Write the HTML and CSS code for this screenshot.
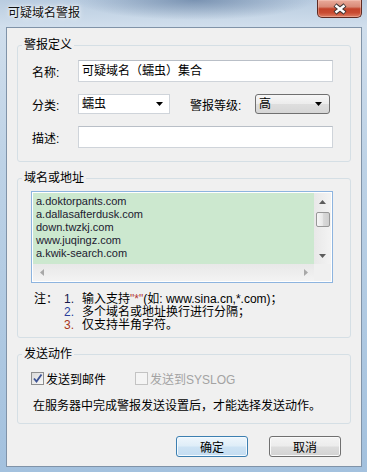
FILE: index.html
```html
<!DOCTYPE html>
<html>
<head>
<meta charset="utf-8">
<link rel="stylesheet" href="styles.css">
</head>
<body>

<div class="window">
    <div class="titlebar">
        <span class="title">可疑域名警报</span>
        <div class="close">
            <svg width="16" height="12" viewBox="0 0 16 12"><path d="M3 2 L13 10 M13 2 L3 10" stroke="#3e3433" stroke-width="4.6"/><path d="M3.5 2.5 L12.5 9.5 M12.5 2.5 L3.5 9.5" stroke="#fff" stroke-width="2.4"/></svg>
        </div>
    </div>

    <div class="client">
        <fieldset class="group group-alarm">
            <legend>警报定义</legend>
            <div class="body rows">
                <div class="row">
                    <span class="lbl">名称:</span>
                    <div class="textbox">可疑域名（蠕虫）集合</div>
                </div>
                <div class="row">
                    <span class="lbl">分类:</span>
                    <div class="combo">蠕虫<svg class="arrow" width="7" height="4" viewBox="0 0 7 4"><path d="M0 0 H7 L3.5 4 Z" fill="#000"/></svg></div>
                    <span class="lbl lbl-level">警报等级:</span>
                    <div class="combo combo-list">高<svg class="arrow" width="7" height="4" viewBox="0 0 7 4"><path d="M0 0 H7 L3.5 4 Z" fill="#000"/></svg></div>
                </div>
                <div class="row">
                    <span class="lbl">描述:</span>
                    <div class="textbox"></div>
                </div>
            </div>
        </fieldset>

        <fieldset class="group group-domain">
            <legend>域名或地址</legend>
            <div class="body body-domain">
                <div class="listbox">
                    <div class="lines">
                        <div>a.doktorpants.com</div>
                        <div>a.dallasafterdusk.com</div>
                        <div>down.twzkj.com</div>
                        <div>www.juqingz.com</div>
                        <div>a.kwik-search.com</div>
                    </div>
                    <div class="vscroll">
                        <div class="sbtn"><svg width="7" height="4" viewBox="0 0 7 4"><path d="M3.5 0 L7 4 H0 Z" fill="#5c5c5c"/></svg></div>
                        <div class="thumb"></div>
                        <div class="track"></div>
                        <div class="sbtn"><svg width="7" height="4" viewBox="0 0 7 4"><path d="M0 0 H7 L3.5 4 Z" fill="#5c5c5c"/></svg></div>
                    </div>
                    <div class="hscroll">
                        <div class="sbtn"><svg width="4" height="7" viewBox="0 0 4 7"><path d="M0 3.5 L4 0 V7 Z" fill="#a8a8a8"/></svg></div>
                        <div class="sbtn"><svg width="4" height="7" viewBox="0 0 4 7"><path d="M4 3.5 L0 0 V7 Z" fill="#a8a8a8"/></svg></div>
                    </div>
                    <div class="corner"></div>
                </div>

                <div class="note">
                    <span class="note-head">注：</span>
                    <div class="note-lines">
                        <div><span class="num n1">1.</span>输入支持<span class="star">"*"</span>(如: www.sina.cn,*.com)；</div>
                        <div><span class="num n2">2.</span>多个域名或地址换行进行分隔；</div>
                        <div><span class="num n3">3.</span>仅支持半角字符。</div>
                    </div>
                </div>
            </div>
        </fieldset>

        <fieldset class="group group-send">
            <legend>发送动作</legend>
            <div class="body body-send">
                <div class="checks">
                    <label class="check check-mail">
                        <span class="box checked"><svg width="11" height="11" viewBox="0 0 11 11"><path d="M2 5.5 L4.5 8.5 L9.5 1.5" fill="none" stroke="#3d5394" stroke-width="1.9"/></svg></span>
                        发送到邮件
                    </label>
                    <label class="check disabled">
                        <span class="box"></span>
                        发送到SYSLOG
                    </label>
                </div>
                <div class="hint">在服务器中完成警报发送设置后，才能选择发送动作。</div>
            </div>
        </fieldset>

        <div class="actions">
            <div class="btn btn-default">确定</div>
            <div class="btn">取消</div>
        </div>
    </div>
</div>

</body>
</html>
```

FILE: styles.css
```css
body { margin: 0; font-family: "Liberation Sans", "Noto Sans CJK SC", sans-serif; font-size: 12px; color: #000; }

/* window frame */
.window {
    width: 367px; height: 472px; box-sizing: border-box;
    padding: 0 5px 5px 6px;
    display: flex; flex-direction: column;
    background: linear-gradient(180deg, #b9cce0 0, #d0deec 26px, #bdd2e6 35%, #a3c1de 100%);
}
.titlebar {
    flex: none; height: 27px; margin: 0 -5px 0 -6px; padding: 0 5px 0 6px;
    display: flex; justify-content: space-between; align-items: flex-start;
    background: radial-gradient(ellipse 120px 20px at 195px 0, rgba(70,100,140,.55), rgba(70,100,140,0));
}
.title { margin: 5px 0 0 2px; line-height: 16px; color: #101010; text-shadow: 0 0 6px #fff, 0 0 3px #fff; }
.close {
    width: 45px; height: 18px; box-sizing: border-box;
    border: 1px solid #5e2a22; border-top: none; border-radius: 0 0 5px 5px;
    background: linear-gradient(#eaab9b 0%, #d98a77 40%, #c3432a 52%, #c94b31 75%, #de8066 100%);
    display: flex; align-items: center; justify-content: center;
    box-shadow: inset 0 0 0 1px rgba(255,220,210,.35);
}

.client {
    flex: 1; background: #f0f0f0;
    border: 1px solid #8093a8;
    padding: 0 10px;
}

/* group boxes */
.group {
    margin: 8px 0 0; padding: 5px 0 0; min-width: 0;
    border: 1px solid #d5dfe5; border-radius: 3px;
}
.group legend { margin-left: 4px; padding: 0 2px; line-height: 16px; }
.group-alarm { margin-top: 9px; padding: 7px 0 13px; }
.group-domain { padding: 5px 0 5px; }
.group-send { padding: 8px 0 9px; }

.body { padding: 0 17px 0 14px; }
.rows { display: flex; flex-direction: column; gap: 11px; }
.row { display: flex; align-items: center; height: 22px; }
.lbl { width: 46px; flex: none; }
.lbl-level { width: 65px; margin-left: 20px; }

.textbox {
    width: 255px; height: 22px; box-sizing: border-box;
    border: 1px solid #cfd4da; border-top-color: #b9bfc7;
    background: #fff; padding-left: 3px; line-height: 20px;
}
.combo {
    width: 92px; height: 20px; box-sizing: border-box;
    border: 1px solid #cfd4da; background: #fff;
    padding: 0 6px 0 3px; line-height: 18px;
    display: flex; justify-content: space-between; align-items: center;
}
.combo-list {
    width: 75px; border-color: #707070; border-radius: 3px;
    background: linear-gradient(#f7f7f7, #ececec 50%, #dedede 51%, #d6d6d6);
    padding: 0 7px 0 3px;
}

/* domain list */
.body-domain { padding: 0 17px 0 13px; }
.listbox {
    height: 92px; box-sizing: border-box;
    border: 1px solid #8db4df; padding: 1px; background: #fff;
    display: grid; grid-template-columns: 1fr 17px; grid-template-rows: 1fr 17px;
}
.lines {
    background: #cce8cf; padding: 2px 0 0 3px; overflow: hidden;
    font-size: 11px; line-height: 13px; color: #1c2030;
}
.vscroll {
    display: flex; flex-direction: column; align-items: center;
    background: linear-gradient(to right, #e8e8e8, #f3f3f3);
}
.sbtn { width: 17px; height: 17px; flex: none; display: flex; align-items: center; justify-content: center; }
.thumb {
    width: 14px; height: 15px; box-sizing: border-box; margin-top: 2px;
    border: 1px solid #979797; border-radius: 2px;
    background: linear-gradient(to right, #f6f6f6, #e9e9e9 45%, #d8d8d8 55%, #cfcfcf);
}
.track { flex: 1; }
.hscroll {
    display: flex; justify-content: space-between;
    background: linear-gradient(#e8e8e8, #f3f3f3);
}
.corner { background: #f0f0f0; }

.note { display: flex; margin: 10px 0 0 3px; line-height: 13px; }
.note-head { width: 30px; flex: none; }
.num { display: inline-block; width: 18px; }
.n1 { color: #14184a; }
.n2 { color: #2a3f9c; }
.n3 { color: #a8361c; }
.star { color: #b33a3a; }

/* send action */
.body-send { padding: 0 13px; }
.checks { display: flex; align-items: center; height: 16px; }
.check { display: flex; align-items: center; gap: 2px; }
.check-mail { width: 104px; }
.box {
    width: 13px; height: 13px; box-sizing: border-box;
    border: 1px solid #8e8f8f;
    background: linear-gradient(135deg, #d9d9d9, #f9f9f9);
    display: flex; align-items: center; justify-content: center;
}
.check.disabled { color: #a3a3a3; }
.check.disabled .box { border-color: #c3c3c3; background: #f4f4f4; }
.hint { margin: 12px 0 0 2px; line-height: 16px; }

/* buttons */
.actions { display: flex; justify-content: flex-end; gap: 21px; margin-top: 12px; padding-right: 10px; }
.btn {
    width: 72px; height: 21px; box-sizing: border-box;
    border: 1px solid #707070; border-radius: 3px;
    background: linear-gradient(#f4f4f4, #ececec 48%, #dddddd 52%, #d2d2d2);
    box-shadow: inset 0 0 0 1px #fafafa;
    display: flex; align-items: center; justify-content: center;
}
.btn-default {
    border-color: #3c7fb1;
    background: linear-gradient(#eef6fc, #deedf8 48%, #cde3f4 52%, #c3dcf1);
    box-shadow: inset 0 0 0 1px #f4fafe;
}
```
